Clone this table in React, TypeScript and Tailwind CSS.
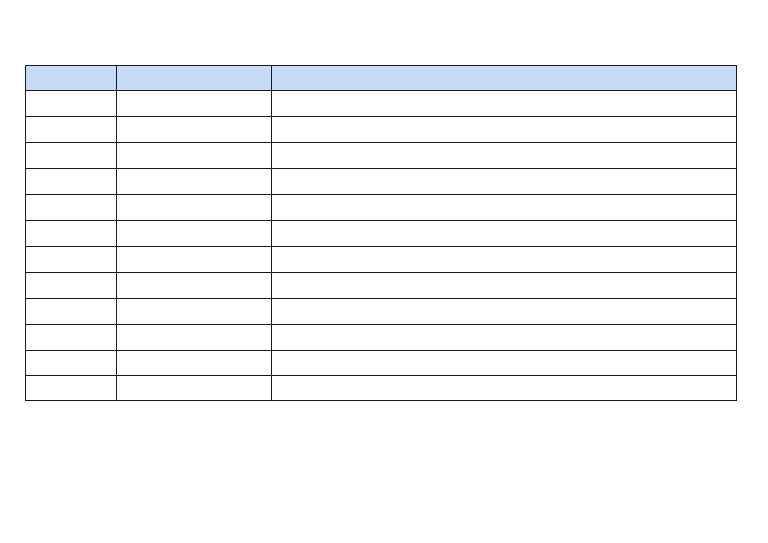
import React from 'react';

const rowHeights = [26, 26, 26, 26, 26, 26, 26, 26, 26, 26, 25, 25];

const App: React.FC = () => {
  return (
    <div className="min-h-[543px] w-full bg-white pl-[25px] pt-[65px]" style={{ fontFamily: '"Liberation Sans", Arial, sans-serif' }}>
      <table className="w-[712px] table-fixed border-collapse text-sm">
        <colgroup>
          <col className="w-[91px]" />
          <col className="w-[155px]" />
          <col />
        </colgroup>
        <thead>
          <tr className="h-[25px] bg-[#c9daf8]">
            <th className="border border-[#1a1a1a] p-0"></th>
            <th className="border border-[#1a1a1a] p-0"></th>
            <th className="border border-[#1a1a1a] p-0"></th>
          </tr>
        </thead>
        <tbody>
          {rowHeights.map((h, i) => (
            <tr key={i} style={{ height: h }}>
              <td className="border border-[#1a1a1a] p-0"></td>
              <td className="border border-[#1a1a1a] p-0"></td>
              <td className="border border-[#1a1a1a] p-0"></td>
            </tr>
          ))}
        </tbody>
      </table>
    </div>
  );
};

export default App;
